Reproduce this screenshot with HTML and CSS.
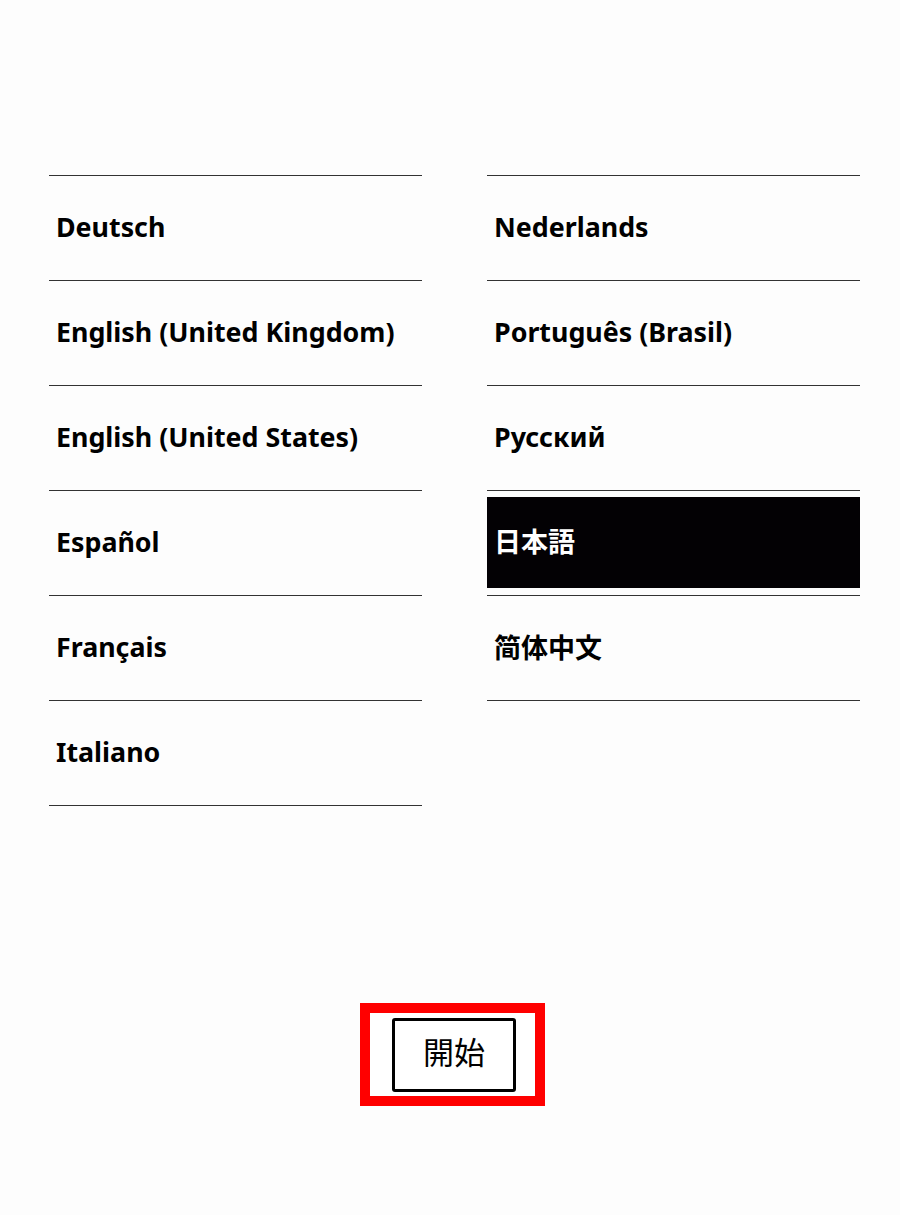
FILE: index.html
```html
<!DOCTYPE html>
<html lang="ja">
<head>
<meta charset="utf-8">
<link rel="stylesheet" href="styles.css">
</head>
<body>
<div class="page">
  <div class="columns">
    <ul class="list">
      <li class="item"><span class="label">Deutsch</span></li>
      <li class="item"><span class="label">English (United Kingdom)</span></li>
      <li class="item"><span class="label">English (United States)</span></li>
      <li class="item"><span class="label">Español</span></li>
      <li class="item"><span class="label">Français</span></li>
      <li class="item"><span class="label">Italiano</span></li>
    </ul>
    <ul class="list">
      <li class="item"><span class="label">Nederlands</span></li>
      <li class="item"><span class="label">Português (Brasil)</span></li>
      <li class="item"><span class="label">Русский</span></li>
      <li class="item selected"><span class="label cjk">日本語</span></li>
      <li class="item"><span class="label cjk">简体中文</span></li>
    </ul>
  </div>
  <div class="action">
    <div class="highlight">
      <button class="start">開始</button>
    </div>
  </div>
</div>
</body>
</html>
```
FILE: styles.css
```css
html, body {
  margin: 0;
  padding: 0;
  background: #fdfdfd;
}
.page {
  width: 900px;
  height: 1215px;
  display: flex;
  flex-direction: column;
  font-family: "Noto Sans", "Noto Sans CJK JP", sans-serif;
  color: #000;
}
.columns {
  display: grid;
  grid-template-columns: 373px 373px;
  column-gap: 65px;
  padding: 175px 0 0 49px;
  align-items: start;
}
.list {
  list-style: none;
  margin: 0;
  padding: 0;
  border-bottom: 1px solid #333;
}
.item {
  border-top: 1px solid #333;
  height: 104px;
  display: flex;
  align-items: center;
  box-sizing: content-box;
}
.label {
  padding-left: 7px;
  padding-bottom: 1px;
  font-size: 26.8px;
  font-weight: 700;
  line-height: 1;
  font-family: "Noto Sans", "Noto Sans CJK SC", sans-serif;
}
.label.cjk {
  font-size: 27px;
  padding-bottom: 4px;
  font-family: "Noto Sans CJK SC", sans-serif;
}
.item.selected {
  padding: 6px 0 7px;
  height: 91px;
  background: linear-gradient(#030104, #030104) content-box;
  color: #fff;
}
.item.selected .label {
  font-family: "Noto Sans CJK JP", sans-serif;
}
.action {
  display: flex;
  justify-content: center;
  margin-top: 197px;
  padding-left: 5px;
}
.highlight {
  border: 10px solid #ff0000;
  padding: 5px 19px 4px 22px;
  background: #fff;
}
.start {
  width: 124px;
  height: 74px;
  border: 3px solid #000;
  border-radius: 3px;
  background: #fff;
  font-family: "Noto Sans CJK JP", sans-serif;
  font-size: 31px;
  font-weight: 400;
  line-height: 1;
  color: #000;
  padding: 0 0 9px;
  display: block;
}
```
